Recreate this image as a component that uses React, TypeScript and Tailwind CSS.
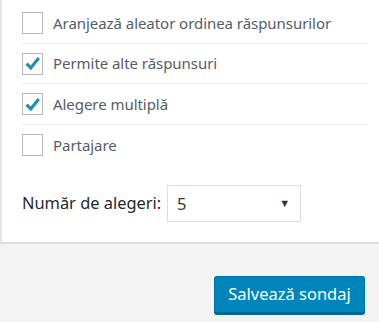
import React from "react";

const options = [
  { label: "Aranjează aleator ordinea răspunsurilor", checked: false, h: "h-[44px] pt-[3px]" },
  { label: "Permite alte răspunsuri", checked: true, h: "h-[40px]" },
  { label: "Alegere multiplă", checked: true, h: "h-[41px]" },
  { label: "Partajare", checked: false, h: "h-[40px]" },
];

const Checkbox = ({ checked }: { checked: boolean }) => (
  <span className="w-[21px] h-[22px] border border-[#b4b9be] bg-white flex items-center justify-center shrink-0">
    {checked && (
      <svg width="19" height="19" viewBox="0 0 20 20">
        <path
          d="M3.8 10.2 L8.2 14.6 L16.6 4.2"
          fill="none"
          stroke="#1e8cbe"
          strokeWidth="3.2"
        />
      </svg>
    )}
  </span>
);

export default function App() {
  return (
    <div className="w-[379px] h-[322px] bg-[#f3f3f3] font-['Noto_Sans',sans-serif] overflow-hidden">
      <div className="bg-white border-l-2 border-[#e5e5e5] border-b-2 border-b-[#dddddd]">
        <div className="pl-5 pr-3">
          {options.map((o, i) => (
            <div
              key={o.label}
              className={`flex items-center gap-[10px] ${o.h} ${
                i < options.length - 1 ? "border-b border-[#eeeeee]" : ""
              }`}
            >
              <Checkbox checked={o.checked} />
              <span className="text-[15px] text-[#555d66] tracking-[-0.05px]">{o.label}</span>
            </div>
          ))}
        </div>

        <div className="flex items-center pl-5 mt-[20px] pb-[20px]">
          <span className="text-[16.4px] text-[#23282d] mr-[6px]">Număr de alegeri:</span>
          <div className="w-[134px] h-[37px] border border-[#dddddd] flex items-center justify-between pl-[9px] pr-[10px]">
            <span className="text-[16.5px] text-[#32373c] pt-[2px]">5</span>
            <span className="text-[11px] text-[#32373c]">▼</span>
          </div>
        </div>
      </div>

      <div className="flex justify-end pr-[14px] pt-[32px]">
        <button className="w-[151px] h-[38px] bg-[#0085ba] border border-[#0073aa] border-b-[#006799] border-b-2 rounded-[3px] text-white text-[16.5px] shadow-[0_1px_0_#006799]">
          Salvează sondaj
        </button>
      </div>
    </div>
  );
}
